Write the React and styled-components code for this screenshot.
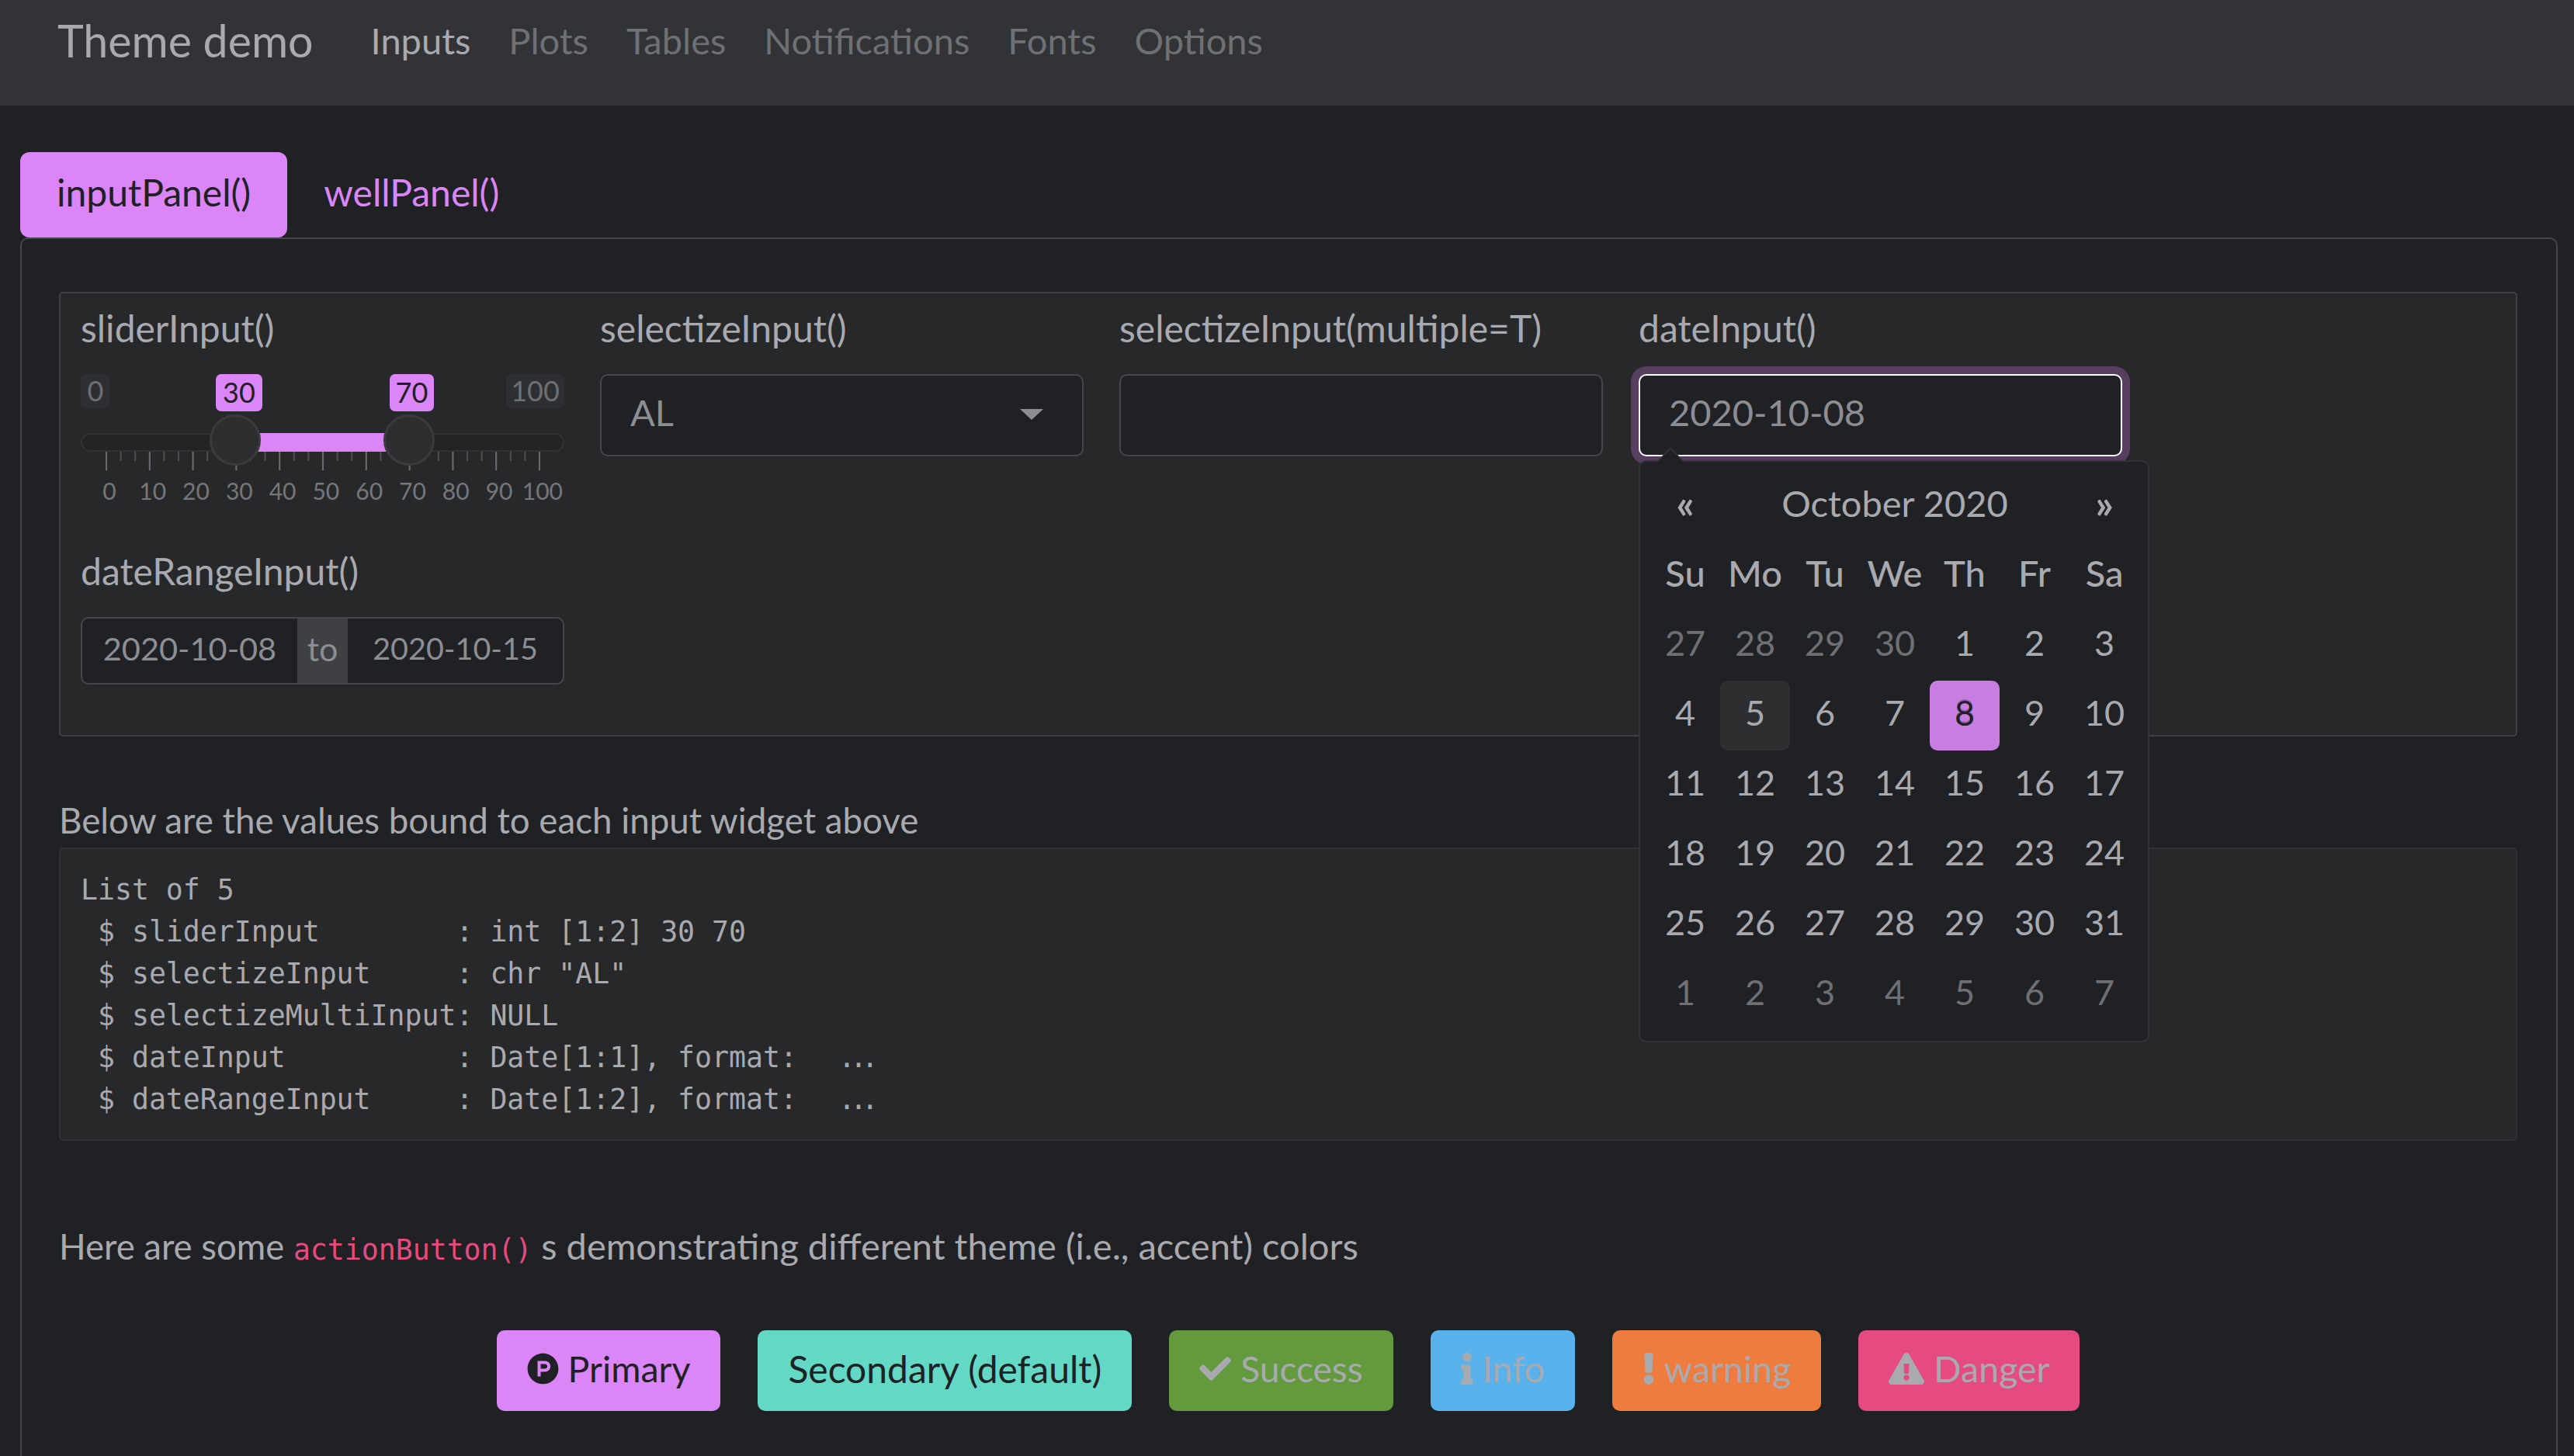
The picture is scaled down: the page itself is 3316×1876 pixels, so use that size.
import React from "react";
import styled, { createGlobalStyle } from "styled-components";
import { FaProductHunt, FaCheck, FaInfo, FaExclamation, FaExclamationTriangle } from "react-icons/fa";

const SANS = `"Lato", "Open Sans", sans-serif`;
const MONO = `"DejaVu Sans Mono", "Liberation Mono", monospace`;
const TEXT = "#a9aab0";
const DARK = "#202124";
const PRIMARY = "#db85f7";

const Global = createGlobalStyle`
  * { box-sizing: border-box; }
  html, body { margin: 0; padding: 0; background: ${DARK}; overflow: hidden; }
  body { width: 3316px; height: 1876px; font-family: ${SANS}; color: ${TEXT}; font-size: 46px; }
`;

const Nav = styled.nav`
  height: 136px; background: #323336; display: flex; align-items: flex-start;
  padding: 21px 0 0 74px; line-height: 62px;
`;
const Brand = styled.div`font-size: 57.3px; margin-right: 74px; color: ${TEXT};`;
const NavLink = styled.a`
  font-size: 47px; margin-right: 49px; color: ${p => (p.$active ? TEXT : "#6f7074")};
`;

const Main = styled.main`padding: 60px 21px 0 26px;`;
const Tabs = styled.div`display: flex; height: 110px;`;
const Tab = styled.div`
  display: flex; align-items: center; padding: 0 47px 8px; font-size: 48px;
  border-radius: 12px; color: ${p => (p.$active ? DARK : PRIMARY)};
  background: ${p => (p.$active ? PRIMARY : "transparent")};
`;
const TabPanel = styled.section`
  border: 2px solid #45464a; border-bottom: 0; border-radius: 10px 10px 0 0;
  padding: 68px 50px 0 48px; height: 1570px;
`;
const Well = styled.div`
  background: #27282a; border: 2px solid #3f4043; border-radius: 5px;
  height: 573px; padding: 0 26px; display: grid;
  grid-template-columns: repeat(4, 623px); column-gap: 46px; align-content: start;
  grid-template-rows: 313px auto;
`;
const Field = styled.div`position: relative; display: flex; flex-direction: column;`;
const Label = styled.label`
  font-size: 48px; line-height: 60px; height: 60px; margin: 15px 0 29px; color: ${TEXT};
`;
const InputBox = styled.div`
  height: 106px; border-radius: 10px; border: 2px solid #46474a; background: ${DARK};
  display: flex; align-items: center; justify-content: space-between; padding: 0 37px 8px;
  font-size: 47px; color: #8d8e93;
`;
const FocusInput = styled(InputBox)`
  border-color: #fff; box-shadow: 0 0 0 10px #57405f;
`;
const Caret = styled.span`
  width: 0; height: 0; border-left: 15px solid transparent; border-right: 15px solid transparent;
  border-top: 14px solid #8d8e93; margin: 6px 13px 0 0;
`;

const Slider = styled.div`position: relative; height: 190px;`;
const Chip = styled.span`
  position: absolute; top: 0; height: ${p => (p.$on ? 48 : 44)}px; line-height: ${p => (p.$on ? 46 : 42)}px;
  left: ${p => p.$left}px; width: ${p => p.$w}px; text-align: center; font-size: 36px; border-radius: 7px;
  background: ${p => (p.$on ? PRIMARY : "#2e2f32")}; color: ${p => (p.$on ? DARK : "#6f7074")};
`;
const Track = styled.div`
  position: absolute; top: 76px; left: 0; width: 623px; height: 24px; border-radius: 12px;
  background: #232426; border: 2px solid #303133;
`;
const Fill = styled.div`
  position: absolute; top: 76px; left: 205px; width: 220px; height: 24px; background: ${PRIMARY};
`;
const Handle = styled.div`
  position: absolute; top: 52px; left: ${p => p.$left}px; width: 66px; height: 66px; border-radius: 50%;
  background: #2d2e30; border: 3px solid #3a3b3d;
`;
const Ticks = styled.svg`position: absolute; top: 100px; left: 0;`;
const TickLabels = styled.div`
  position: absolute; top: 130px; left: 9px; display: grid; grid-template-columns: repeat(11, 55.8px);
  font-size: 30px; line-height: 40px; text-align: center; color: #76777b;
`;

const RangeBox = styled(InputBox)`height: 87px; padding: 0; overflow: hidden; justify-content: flex-start;`;
const RangeValue = styled.span`
  flex: 0 0 ${p => p.$w}px; text-align: center; font-size: ${p => p.$size}px; color: #8d8e93; margin-bottom: 8px;
`;
const RangeTo = styled.span`
  flex: 0 0 65px; align-self: stretch; display: flex; align-items: center; justify-content: center;
  background: #3f4043; font-size: 43px; padding-bottom: 6px;
`;

const Picker = styled.div`
  position: absolute; top: 215px; left: 0; width: 658px; height: 750px; z-index: 5;
  background: ${DARK}; border: 2px solid #323336; border-radius: 10px; padding: 12px 13px 0;
  display: grid; grid-template-columns: repeat(7, 90px); grid-auto-rows: 90px;
  &::before, &::after {
    content: ""; position: absolute; left: 22px; width: 0; height: 0;
    border-left: 17px solid transparent; border-right: 17px solid transparent;
  }
  &::before { top: -19px; border-bottom: 18px solid #323336; }
  &::after { top: -16px; border-bottom: 17px solid ${DARK}; }
`;
const Cell = styled.div`
  display: flex; align-items: center; justify-content: center; border-radius: 10px; font-size: 45px;
  padding-bottom: 8px;
  color: ${p => (p.$today ? DARK : p.$dim ? "#6f7074" : TEXT)};
  background: ${p => (p.$today ? "#c87ee0" : p.$hover ? "#2d2e30" : "transparent")};
  text-shadow: ${p => (p.$today ? "0 -2px 0 rgba(0,0,0,.25)" : "none")};
`;
const HeadCell = styled(Cell)`font-size: 47px; font-weight: 500;`;
const ArrowCell = styled(Cell)`font-size: 52px; font-weight: 700;`;
const MonthCell = styled(Cell)`grid-column: span 5; font-size: 47px;`;

const BoundLabel = styled.p`
  margin: 78px 0 5px; height: 60px; line-height: 60px; font-size: 45.7px; color: ${TEXT};
`;
const Pre = styled.pre`
  margin: 0; height: 378px; background: #27282a; border: 2px solid #303133; border-radius: 5px;
  padding: 26px 26px; font-family: ${MONO}; font-size: 36.5px; line-height: 54px; color: ${TEXT};
`;
const Dots = styled.span`letter-spacing: -7px; margin-left: 31px;`;
const Intro = styled.p`
  margin: 105px 0 0; height: 60px; line-height: 60px; font-size: 45.5px; color: ${TEXT};
`;
const IntroTail = styled.span`font-size: 47px;`;
const Code = styled.code`font-family: ${MONO}; font-size: 36.5px; color: #e54b81;`;
const Buttons = styled.div`display: flex; justify-content: center; gap: 48px; margin-top: 79px;`;
const Btn = styled.button`
  display: flex; align-items: center; gap: 12px; height: 104px; padding: 0 39px 6px; border: 0; border-radius: 10px;
  font-family: ${SANS}; font-size: ${p => p.$size || 46.5}px; background: ${p => p.$bg}; color: ${p => p.$fg || TEXT};
`;
const Icon = styled.span`
  display: flex; svg { height: 41px; width: ${p => p.$w}px; }
`;

const months = [
  [27, 1], [28, 1], [29, 1], [30, 1],
  ...Array.from({ length: 31 }, (_, i) => [i + 1, 0]),
  ...[1, 2, 3, 4, 5, 6, 7].map(n => [n, 1]),
];

const ticks = [];
for (let i = 0; i <= 30; i++) {
  const major = i % 3 === 0;
  ticks.push(
    <line key={i} x1={33 + 18.6 * i} x2={33 + 18.6 * i} y1={0} y2={major ? 24 : 12} stroke={major ? "#6a6b6f" : "#4d4e51"} strokeWidth="2.1" />
  );
}

export default function App() {
  return (
    <>
      <Global />
      <Nav>
        <Brand>Theme demo</Brand>
        <NavLink $active>Inputs</NavLink>
        {["Plots", "Tables", "Notifications", "Fonts", "Options"].map(t => <NavLink key={t}>{t}</NavLink>)}
      </Nav>
      <Main>
        <Tabs>
          <Tab $active>inputPanel()</Tab>
          <Tab>wellPanel()</Tab>
        </Tabs>
        <TabPanel>
          <Well>
            <Field>
              <Label>sliderInput()</Label>
              <Slider>
                <Chip $left={0} $w={38}>0</Chip>
                <Chip $left={548} $w={75}>100</Chip>
                <Chip $on $left={174} $w={60}>30</Chip>
                <Chip $on $left={398} $w={57}>70</Chip>
                <Track />
                <Fill />
                <Ticks width="623" height="24">{ticks}</Ticks>
                <Handle $left={166} />
                <Handle $left={390} />
                <TickLabels>
                  {[0, 10, 20, 30, 40, 50, 60, 70, 80, 90, 100].map(n => <span key={n}>{n}</span>)}
                </TickLabels>
              </Slider>
            </Field>
            <Field>
              <Label>selectizeInput()</Label>
              <InputBox>AL<Caret /></InputBox>
            </Field>
            <Field>
              <Label>selectizeInput(multiple=T)</Label>
              <InputBox />
            </Field>
            <Field>
              <Label>dateInput()</Label>
              <FocusInput>2020-10-08</FocusInput>
              <Picker>
                <ArrowCell>«</ArrowCell>
                <MonthCell>October 2020</MonthCell>
                <ArrowCell>»</ArrowCell>
                {["Su", "Mo", "Tu", "We", "Th", "Fr", "Sa"].map(d => <HeadCell key={d}>{d}</HeadCell>)}
                {months.map(([n, dim], i) => (
                  <Cell key={i} $dim={dim} $hover={!dim && n === 5} $today={!dim && n === 8}>{n}</Cell>
                ))}
              </Picker>
            </Field>
            <Field>
              <Label>dateRangeInput()</Label>
              <RangeBox>
                <RangeValue $w={277} $size={41.5}>2020-10-08</RangeValue>
                <RangeTo>to</RangeTo>
                <RangeValue $w={277} $size={39.5}>2020-10-15</RangeValue>
              </RangeBox>
            </Field>
          </Well>
          <BoundLabel>Below are the values bound to each input widget above</BoundLabel>
          <Pre>{`List of 5
 $ sliderInput        : int [1:2] 30 70
 $ selectizeInput     : chr "AL"
 $ selectizeMultiInput: NULL
 $ dateInput          : Date[1:1], format: `}<Dots>...</Dots>{`
 $ dateRangeInput     : Date[1:2], format: `}<Dots>...</Dots></Pre>
          <Intro>Here are some <Code>actionButton()</Code> <IntroTail>s demonstrating different theme (i.e., accent) colors</IntroTail></Intro>
          <Buttons>
            <Btn $bg={PRIMARY} $fg={DARK}><Icon $w={41}><FaProductHunt /></Icon>Primary</Btn>
            <Btn $bg="#62d8c5" $fg={DARK} $size={48}>Secondary (default)</Btn>
            <Btn $bg="#629a3d" $size={46}><Icon $w={41}><FaCheck /></Icon>Success</Btn>
            <Btn $bg="#59b2ec"><Icon $w={16}><FaInfo /></Icon>Info</Btn>
            <Btn $bg="#ee7c3e"><Icon $w={16}><FaExclamation /></Icon>warning</Btn>
            <Btn $bg="#e54b81"><Icon $w={46}><FaExclamationTriangle /></Icon>Danger</Btn>
          </Buttons>
        </TabPanel>
      </Main>
    </>
  );
}
